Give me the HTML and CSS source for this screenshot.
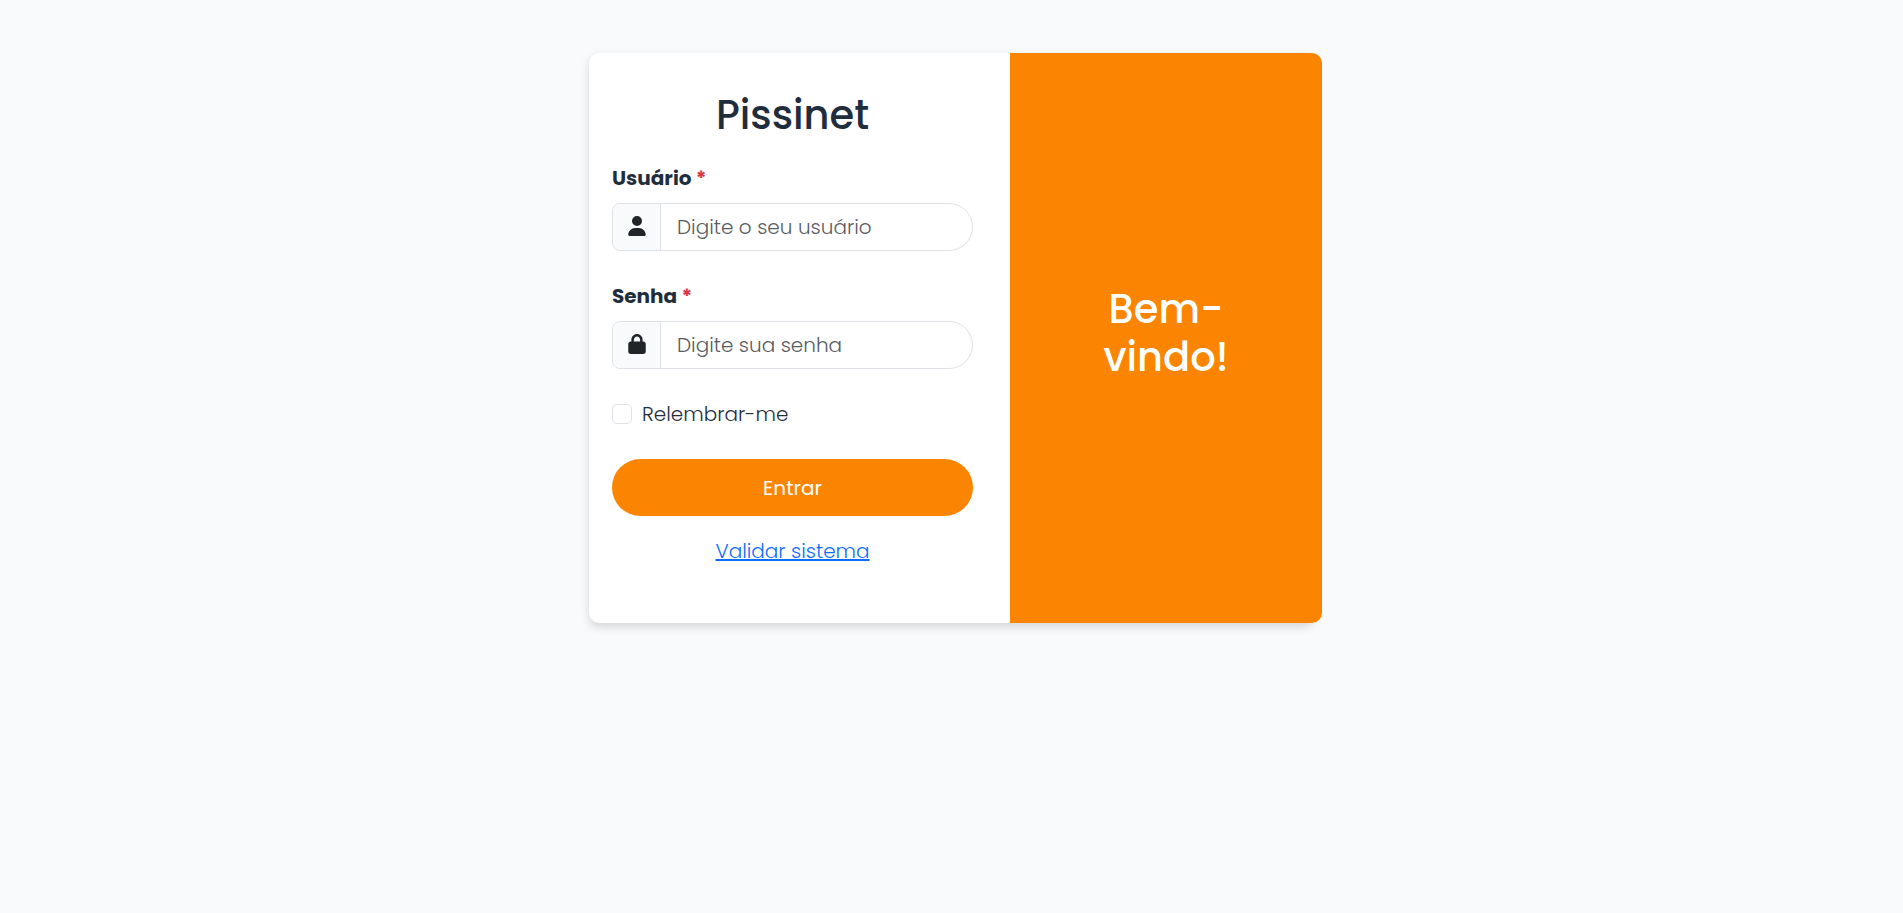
FILE: index.html
```html
<!DOCTYPE html>
<html lang="pt-BR">
<head>
<meta charset="utf-8">
<meta name="viewport" content="width=device-width, initial-scale=1">
<title>Pissinet</title>
<link rel="stylesheet" href="styles.css">
</head>
<body>
<main class="login-card">
  <section class="login-form-panel">
    <h1 class="brand">Pissinet</h1>
    <form class="login-form">
      <div class="field">
        <label class="field-label" for="usuario">Usuário <span class="required">*</span></label>
        <div class="input-group">
          <span class="input-icon">
            <svg viewBox="0 0 448 512" aria-hidden="true"><path d="M224 256A128 128 0 1 0 224 0a128 128 0 1 0 0 256zm-45.700 48C79.800 304 0 383.800 0 482.300C0 498.700 13.300 512 29.700 512H418.300c16.400 0 29.700-13.300 29.700-29.700C448 383.800 368.200 304 269.700 304H178.300z"/></svg>
          </span>
          <input class="input-text" id="usuario" type="text" placeholder="Digite o seu usuário">
        </div>
      </div>
      <div class="field">
        <label class="field-label" for="senha">Senha <span class="required">*</span></label>
        <div class="input-group">
          <span class="input-icon">
            <svg viewBox="0 0 448 512" aria-hidden="true"><path d="M144 144v48H304V144c0-44.200-35.800-80-80-80s-80 35.800-80 80zM80 192V144C80 64.500 144.500 0 224 0s144 64.500 144 144v48h16c35.300 0 64 28.700 64 64V448c0 35.300-28.700 64-64 64H64c-35.300 0-64-28.700-64-64V256c0-35.300 28.700-64 64-64H80z"/></svg>
          </span>
          <input class="input-text" id="senha" type="password" placeholder="Digite sua senha">
        </div>
      </div>
      <div class="remember">
        <input class="remember-box" id="lembrar" type="checkbox">
        <label for="lembrar">Relembrar-me</label>
      </div>
      <button class="submit" type="submit">Entrar</button>
    </form>
    <a class="validate" href="#">Validar sistema</a>
  </section>
  <section class="welcome-panel">
    <h2 class="welcome">Bem-vindo!</h2>
  </section>
</main>
</body>
</html>
```
FILE: styles.css
```css
*,
*::before,
*::after {
  box-sizing: border-box;
}

body {
  margin: 0;
  padding: 53px 8px;
  background: #f8fafc;
  color: #1f2d3d;
  font-family: Poppins, Inter, "Open Sans", sans-serif;
  font-size: 20px;
  font-weight: 300;
  line-height: 30px;
}

.login-card {
  display: grid;
  grid-template-columns: minmax(0, 421fr) minmax(0, 304fr);
  width: 100%;
  max-width: 725px;
  margin: 0 auto;
  border-radius: 10px;
  background: #fff;
  box-shadow: 0 4px 10px rgba(0, 0, 0, 0.15);
}

.login-form-panel {
  display: flex;
  flex-direction: column;
  padding: 38px 37px 57px 23px;
}

.brand,
.welcome {
  margin: 0;
  font-size: 40px;
  font-weight: 500;
  line-height: 48px;
  text-align: center;
}

.brand {
  margin-bottom: 24px;
}

.login-form {
  display: flex;
  flex-direction: column;
  gap: 30px;
}

.field {
  display: flex;
  flex-direction: column;
  gap: 10px;
}

.field-label {
  font-weight: 700;
}

.required {
  color: #dc3545;
}

.input-group {
  display: flex;
  height: 48px;
  overflow: hidden;
  border: 1px solid #dee2e6;
  border-radius: 8px 24px 24px 8px;
  background: #fff;
}

.input-icon {
  display: flex;
  flex: none;
  justify-content: center;
  width: 48px;
  padding-top: 12px;
  border-right: 1px solid #dee2e6;
  background: #f8fafc;
}

.input-icon svg {
  width: 18px;
  height: 20px;
  fill: #212529;
}

.input-text {
  flex: 1;
  min-width: 0;
  padding: 0 16px;
  border: 0;
  outline: 0;
  background: transparent;
  color: inherit;
  font: inherit;
}

.input-text::placeholder {
  color: #595c5f;
  opacity: 1;
}

.remember {
  display: flex;
  align-items: center;
  gap: 10px;
}

.remember-box {
  width: 20px;
  height: 20px;
  margin: 0;
  border: 1px solid #dee2e6;
  border-radius: 5px;
  appearance: none;
  background: #fff;
}

.remember-box:checked {
  background: #fb8500;
}

.submit {
  height: 57px;
  padding: 0 16px;
  border: 0;
  border-radius: 30px;
  background: #fb8500;
  color: #fff;
  font: inherit;
  font-weight: 400;
  cursor: pointer;
}

.validate {
  align-self: center;
  margin-top: 20px;
  color: #0d6efd;
}

.welcome-panel {
  display: flex;
  align-items: center;
  margin-right: -8px;
  padding: 0 60px 10px;
  border-radius: 0 10px 10px 0;
  background: #fb8500;
  color: #fff;
}

.welcome {
  flex: 1;
}
```
